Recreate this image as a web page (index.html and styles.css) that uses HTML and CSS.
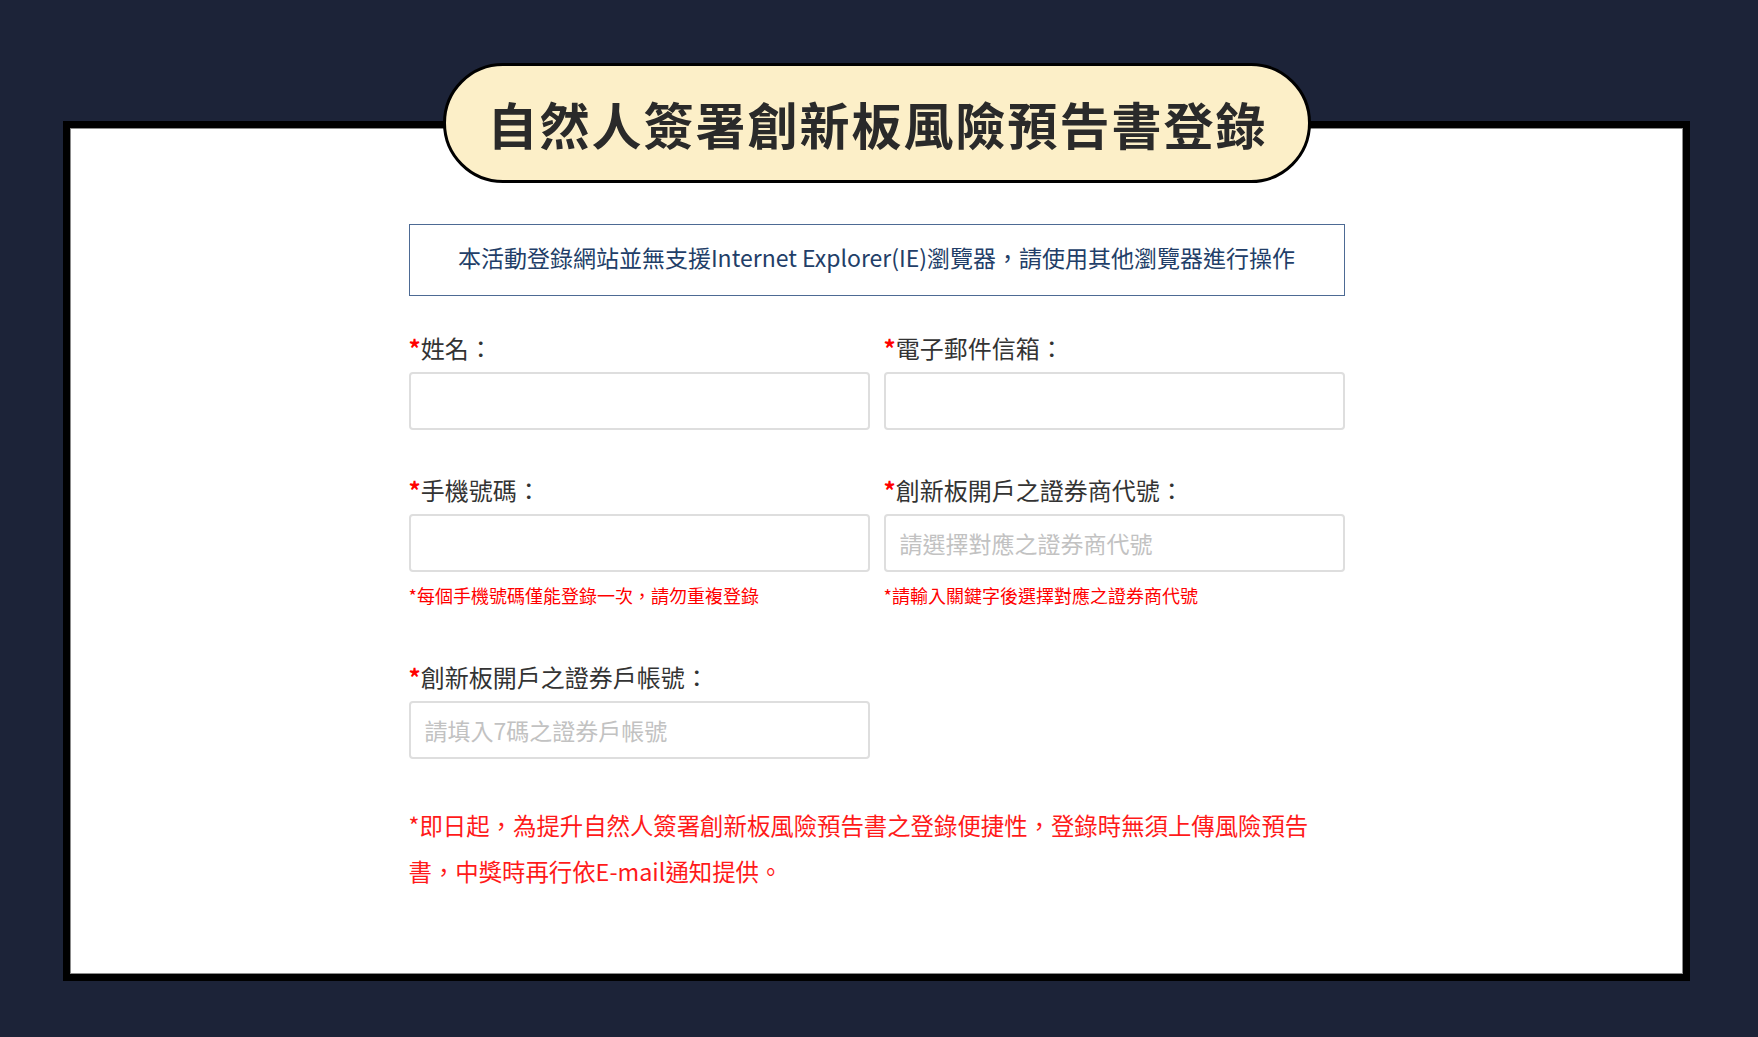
FILE: index.html
```html
<!DOCTYPE html>
<html lang="zh-Hant">
<head>
<meta charset="utf-8">
<title>自然人簽署創新板風險預告書登錄</title>
<link rel="stylesheet" href="styles.css">
</head>
<body>
<div class="page">
  <div class="frame">
    <div class="title-pill"><h1 class="title">自然人簽署創新板風險預告書登錄</h1></div>
    <div class="content">
      <div class="notice">本活動登錄網站並無支援Internet Explorer(IE)瀏覽器，請使用其他瀏覽器進行操作</div>
      <form class="form">
        <div class="field">
          <label class="label"><span class="req">*</span>姓名：</label>
          <input class="input" type="text">
        </div>
        <div class="field">
          <label class="label"><span class="req">*</span>電子郵件信箱：</label>
          <input class="input" type="text">
        </div>
        <div class="field">
          <label class="label"><span class="req">*</span>手機號碼：</label>
          <input class="input" type="text">
          <p class="hint">*每個手機號碼僅能登錄一次，請勿重複登錄</p>
        </div>
        <div class="field">
          <label class="label"><span class="req">*</span>創新板開戶之證券商代號：</label>
          <input class="input" type="text" placeholder="請選擇對應之證券商代號">
          <p class="hint">*請輸入關鍵字後選擇對應之證券商代號</p>
        </div>
        <div class="field">
          <label class="label"><span class="req">*</span>創新板開戶之證券戶帳號：</label>
          <input class="input" type="text" placeholder="請填入7碼之證券戶帳號">
        </div>
      </form>
      <p class="note">*即日起，為提升自然人簽署創新板風險預告書之登錄便捷性，登錄時無須上傳風險預告書，中獎時再行依E-mail通知提供。</p>
    </div>
  </div>
</div>
</body>
</html>
```

FILE: styles.css
```css
* {
  box-sizing: border-box;
}

html, body {
  margin: 0;
  padding: 0;
  background: #1c2338;
}

body {
  font-family: "Noto Sans CJK TC", "Noto Sans", sans-serif;
  color: #333;
  min-height: 1037px;
}

.page {
  padding: 121px 0 0 63px;
}

.frame {
  position: relative;
  width: 1627px;
  border: 7px solid #000;
  background: #fff;
  box-shadow: inset 0 0 0 1px #8c8c8c;
  padding: 96px 0 80px;
}

.title-pill {
  position: absolute;
  top: -65px;
  left: 50%;
  transform: translateX(-50%);
  width: 868px;
  height: 120px;
  border: 3px solid #000;
  border-radius: 60px;
  background: #fcefc8;
  display: flex;
  align-items: center;
  justify-content: center;
}

.title {
  margin: 0;
  font-size: 50px;
  font-weight: 700;
  letter-spacing: 2px;
  padding-left: 2px;
  line-height: 1;
  color: #2a2a2a;
  white-space: nowrap;
}

.content {
  width: 936px;
  margin: 0 auto;
}

.notice {
  border: 1px solid #4d6a94;
  padding: 16px 0 22px;
  font-size: 23px;
  line-height: 32px;
  color: #223e68;
  text-align: center;
  white-space: nowrap;
  margin-bottom: 34px;
}

.form {
  display: grid;
  grid-template-columns: 1fr 1fr;
  column-gap: 14px;
}

.field {
  display: flex;
  flex-direction: column;
  margin-bottom: 42px;
}

.label {
  font-size: 24px;
  line-height: 36px;
  color: #333;
  margin-bottom: 6px;
  white-space: nowrap;
}

.req {
  color: #ff0000;
  font-weight: 700;
}

.input {
  height: 58px;
  width: 100%;
  border: 2px solid #dedede;
  border-radius: 4px;
  background: #fff;
  padding: 0 14px;
  font-family: "Noto Sans CJK TC", "Noto Sans", sans-serif;
  font-size: 23px;
  color: #333;
  outline: none;
}

.input::placeholder {
  color: #c2c2c2;
}

.hint {
  margin: 10px 0 8px;
  font-size: 18px;
  line-height: 27px;
  color: #ff0000;
  white-space: nowrap;
}

.note {
  margin: 1px 0 0;
  width: 915px;
  font-size: 23.4px;
  line-height: 46px;
  color: #ff1a1a;
}
```
